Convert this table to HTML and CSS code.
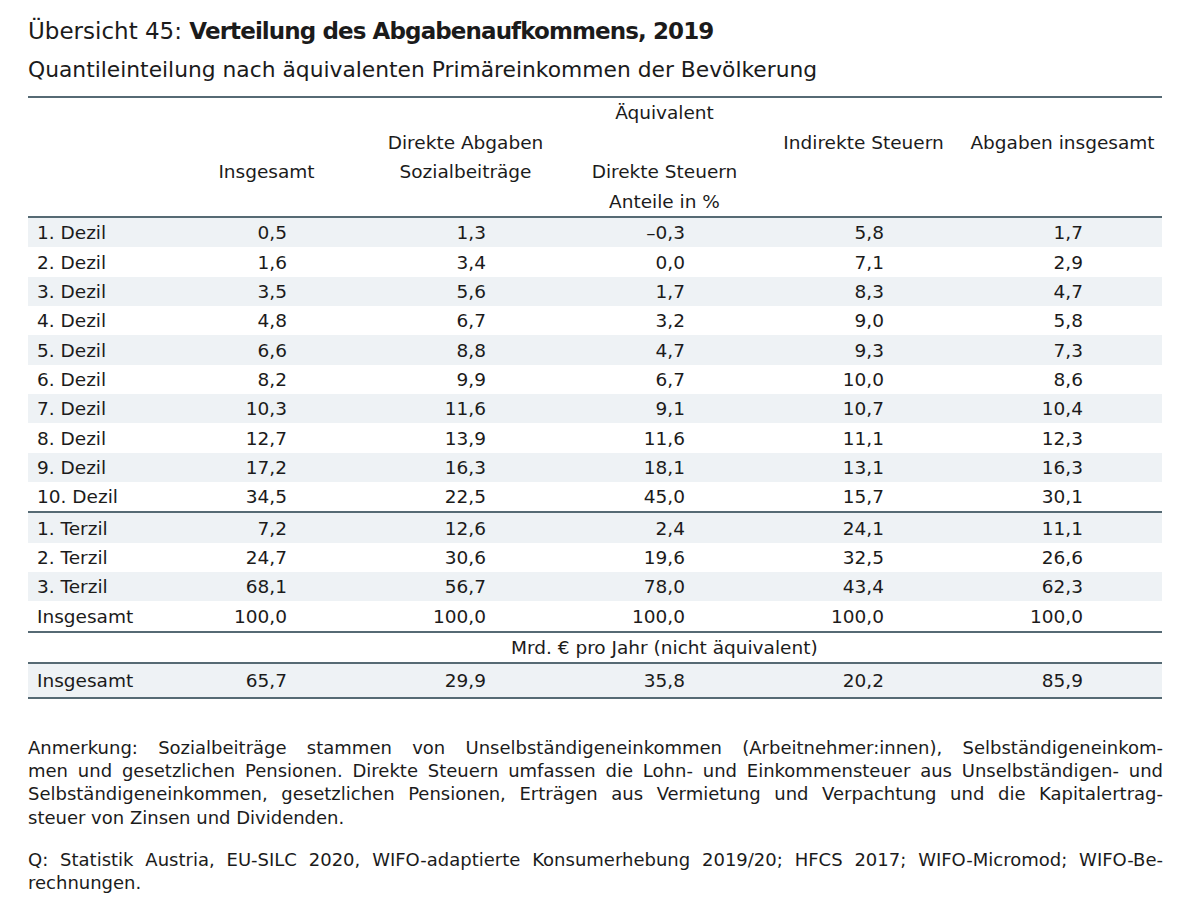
FILE: index.html
```html
<!DOCTYPE html>
<html lang="de">
<head>
<meta charset="utf-8">
<title>Übersicht 45</title>
<link rel="stylesheet" href="styles.css">
</head>
<body>
<div class="page">
  <h1 class="title">Übersicht 45: <b>Verteilung des Abgabenaufkommens, 2019</b></h1>
  <p class="subtitle">Quantileinteilung nach äquivalenten Primäreinkommen der Bevölkerung</p>

  <table class="tbl">
    <colgroup>
      <col class="c-label"><col class="c-num"><col class="c-num"><col class="c-num"><col class="c-num"><col class="c-num">
    </colgroup>
    <thead>
      <tr><th></th><th></th><th></th><th>Äquivalent</th><th></th><th></th></tr>
      <tr><th></th><th></th><th>Direkte Abgaben</th><th></th><th>Indirekte Steuern</th><th>Abgaben insgesamt</th></tr>
      <tr><th></th><th>Insgesamt</th><th>Sozialbeiträge</th><th>Direkte Steuern</th><th></th><th></th></tr>
      <tr class="hlast"><th></th><th></th><th></th><th>Anteile in %</th><th></th><th></th></tr>
    </thead>
    <tbody>
      <tr class="s"><td>1. Dezil</td><td>0,5</td><td>1,3</td><td>–0,3</td><td>5,8</td><td>1,7</td></tr>
      <tr><td>2. Dezil</td><td>1,6</td><td>3,4</td><td>0,0</td><td>7,1</td><td>2,9</td></tr>
      <tr class="s"><td>3. Dezil</td><td>3,5</td><td>5,6</td><td>1,7</td><td>8,3</td><td>4,7</td></tr>
      <tr><td>4. Dezil</td><td>4,8</td><td>6,7</td><td>3,2</td><td>9,0</td><td>5,8</td></tr>
      <tr class="s"><td>5. Dezil</td><td>6,6</td><td>8,8</td><td>4,7</td><td>9,3</td><td>7,3</td></tr>
      <tr><td>6. Dezil</td><td>8,2</td><td>9,9</td><td>6,7</td><td>10,0</td><td>8,6</td></tr>
      <tr class="s"><td>7. Dezil</td><td>10,3</td><td>11,6</td><td>9,1</td><td>10,7</td><td>10,4</td></tr>
      <tr><td>8. Dezil</td><td>12,7</td><td>13,9</td><td>11,6</td><td>11,1</td><td>12,3</td></tr>
      <tr class="s"><td>9. Dezil</td><td>17,2</td><td>16,3</td><td>18,1</td><td>13,1</td><td>16,3</td></tr>
      <tr class="rule"><td>10. Dezil</td><td>34,5</td><td>22,5</td><td>45,0</td><td>15,7</td><td>30,1</td></tr>
      <tr class="s"><td>1. Terzil</td><td>7,2</td><td>12,6</td><td>2,4</td><td>24,1</td><td>11,1</td></tr>
      <tr><td>2. Terzil</td><td>24,7</td><td>30,6</td><td>19,6</td><td>32,5</td><td>26,6</td></tr>
      <tr class="s"><td>3. Terzil</td><td>68,1</td><td>56,7</td><td>78,0</td><td>43,4</td><td>62,3</td></tr>
      <tr class="rule"><td>Insgesamt</td><td>100,0</td><td>100,0</td><td>100,0</td><td>100,0</td><td>100,0</td></tr>
      <tr class="rule unit"><td></td><td colspan="5" class="unit-cell">Mrd. € pro Jahr (nicht äquivalent)</td></tr>
      <tr class="s rule last"><td>Insgesamt</td><td>65,7</td><td>29,9</td><td>35,8</td><td>20,2</td><td>85,9</td></tr>
    </tbody>
  </table>

  <div class="note">
    <div class="jl">Anmerkung: Sozialbeiträge stammen von Unselbständigeneinkommen (Arbeitnehmer:innen), Selbständigeneinkom-</div>
    <div class="jl">men und gesetzlichen Pensionen. Direkte Steuern umfassen die Lohn- und Einkommensteuer aus Unselbständigen- und</div>
    <div class="jl">Selbständigeneinkommen, gesetzlichen Pensionen, Erträgen aus Vermietung und Verpachtung und die Kapitalertrag-</div>
    <div>steuer von Zinsen und Dividenden.</div>
  </div>
  <div class="note">
    <div class="jl">Q: Statistik Austria, EU-SILC 2020, WIFO-adaptierte Konsumerhebung 2019/20; HFCS 2017; WIFO-Micromod; WIFO-Be-</div>
    <div>rechnungen.</div>
  </div>
</div>
</body>
</html>
```

FILE: styles.css
```css
html, body {
  margin: 0;
  padding: 0;
  background: #ffffff;
}

body {
  font-family: "DejaVu Sans", "Liberation Sans", sans-serif;
  color: #1b1b1b;
}

.page {
  width: 1134px;
  padding: 14px 0 0 28px;
}

.title {
  margin: 0;
  font-size: 23px;
  font-weight: normal;
  line-height: 34px;
}

.title b {
  font-weight: bold;
  letter-spacing: -0.9px;
}

.subtitle {
  margin: 4px 0 0;
  font-size: 21.8px;
  line-height: 36px;
  padding-bottom: 8px;
}

.tbl {
  width: 1134px;
  border-collapse: collapse;
  table-layout: fixed;
  border-top: 2px solid #566a74;
  font-size: 18.5px;
}

.c-label { width: 139px; }
.c-num { width: 199px; }

.tbl th {
  font-weight: normal;
  text-align: center;
  height: 29.5px;
  padding: 0;
  white-space: nowrap;
  vertical-align: middle;
}

.tbl thead tr.hlast th {
  border-bottom: 2px solid #566a74;
}

.tbl td {
  height: 29.35px;
  padding: 0 79px 0 0;
  text-align: right;
  white-space: nowrap;
  vertical-align: middle;
}

.tbl td:first-child {
  text-align: left;
  padding: 0 0 0 9px;
}

.tbl tr.s td {
  background: #eef2f5;
}

.tbl tr.rule td {
  border-bottom: 2px solid #566a74;
}

.tbl tr.unit td {
  height: 29px;
}

.tbl td.unit-cell {
  text-align: left;
  padding: 0 0 0 344px;
}

.tbl tr.last td {
  height: 33px;
}

.note {
  margin-top: 37px;
  width: 1135px;
  font-size: 18px;
  line-height: 23.3px;
}

.note + .note {
  margin-top: 19px;
}

.note .jl {
  text-align: justify;
  text-align-last: justify;
  white-space: nowrap;
}
```
